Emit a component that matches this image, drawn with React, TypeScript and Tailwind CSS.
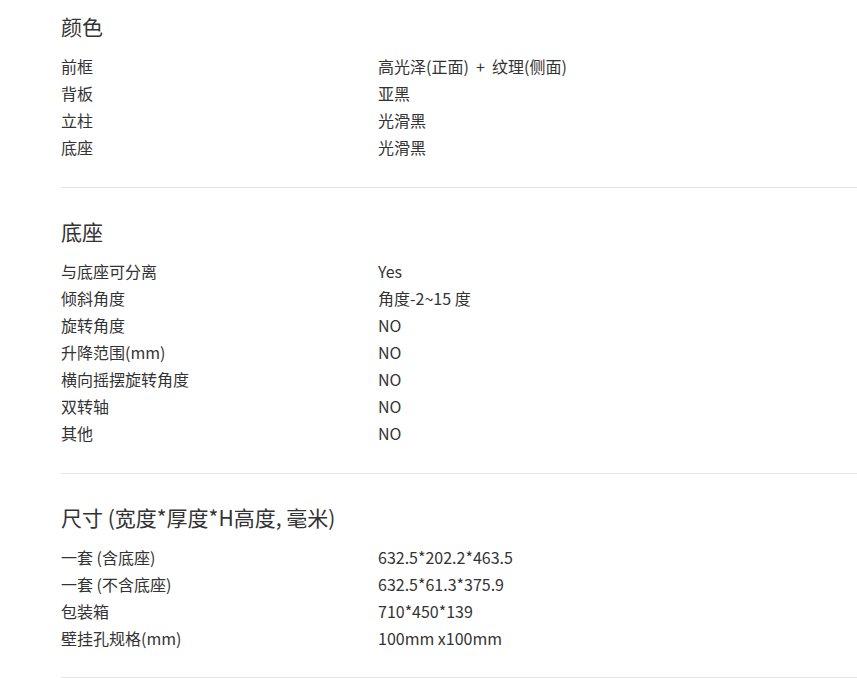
import React from 'react';

type Section = {
  title: string;
  rows: [string, string][];
};

const sections: Section[] = [
  {
    title: '颜色',
    rows: [
      ['前框', '高光泽(正面)\u00a0 +\u00a0 纹理(侧面)'],
      ['背板', '亚黑'],
      ['立柱', '光滑黑'],
      ['底座', '光滑黑'],
    ],
  },
  {
    title: '底座',
    rows: [
      ['与底座可分离', 'Yes'],
      ['倾斜角度', '角度-2~15 度'],
      ['旋转角度', 'NO'],
      ['升降范围(mm)', 'NO'],
      ['横向摇摆旋转角度', 'NO'],
      ['双转轴', 'NO'],
      ['其他', 'NO'],
    ],
  },
  {
    title: '尺寸 (宽度*厚度*H高度, 毫米)',
    rows: [
      ['一套 (含底座)', '632.5*202.2*463.5'],
      ['一套 (不含底座)', '632.5*61.3*375.9'],
      ['包装箱', '710*450*139'],
      ['壁挂孔规格(mm)', '100mm x100mm'],
    ],
  },
];

const App = () => {
  return (
    <div
      className="min-h-screen bg-white pl-[61px] text-[#333]"
      style={{ fontFamily: '"Noto Sans CJK SC", "Noto Sans", sans-serif' }}
    >
      {sections.map((section, i) => (
        <div
          key={section.title}
          className={`border-b border-[#e5e5e5] ${i === 0 ? 'pt-[12px]' : 'pt-[29px]'} ${i === 2 ? 'pb-[25px]' : 'pb-[26px]'}`}
        >
          <h3 className="mb-[13px] text-[21px] leading-[28px] font-normal">{section.title}</h3>
          <div>
            {section.rows.map(([label, value]) => (
              <div key={label} className="flex text-[16px] leading-[27px]">
                <div className="w-[317px] shrink-0">{label}</div>
                <div>{value}</div>
              </div>
            ))}
          </div>
        </div>
      ))}
    </div>
  );
};

export default App;
